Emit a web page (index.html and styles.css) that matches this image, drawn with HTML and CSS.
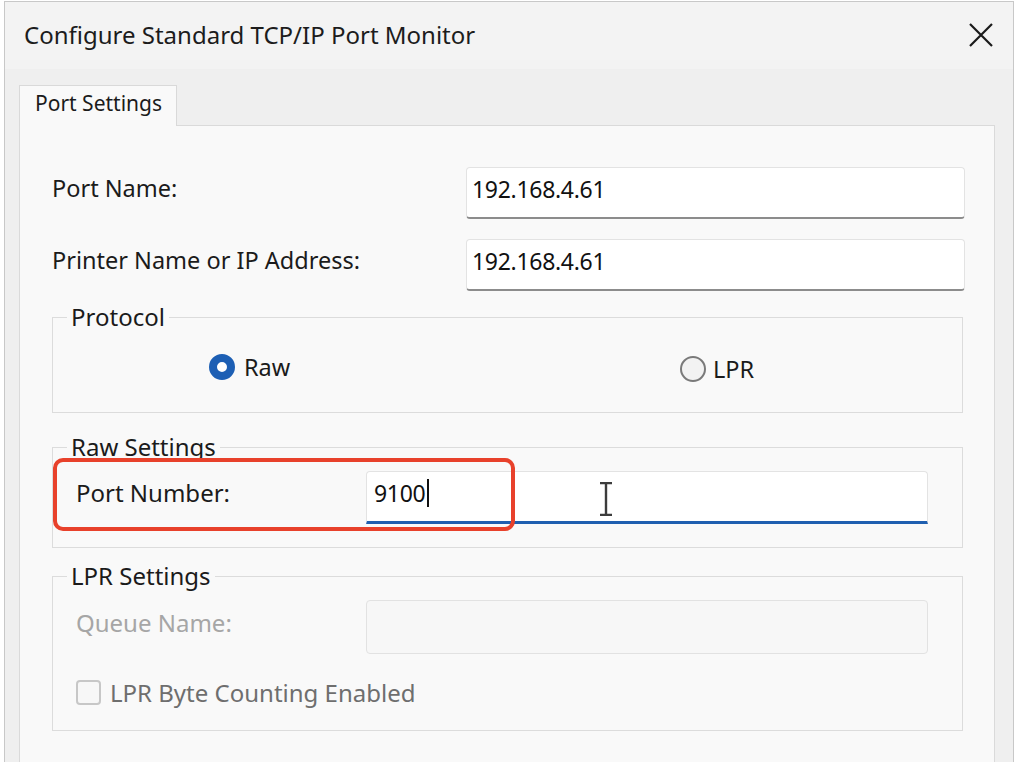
FILE: index.html
```html
<!DOCTYPE html>
<html lang="en">
<head>
    <meta charset="UTF-8">
    <title>Configure Standard TCP/IP Port Monitor</title>
    <link rel="stylesheet" href="styles.css">
</head>
<body>

    <div class="dialog">
        <div class="titlebar">
            <span class="title">Configure Standard TCP/IP Port Monitor</span>
            <svg class="close" width="24" height="24" viewBox="0 0 24 24">
                <path d="M1 1 L23 23 M23 1 L1 23" stroke="#1a1a1a" stroke-width="2.2" fill="none"/>
            </svg>
        </div>

        <div class="body">
            <div class="tabs">
                <div class="tab">Port Settings</div>
            </div>

            <div class="panel">
                <div class="row">
                    <span class="label">Port Name:</span>
                    <div class="field">192.168.4.61</div>
                </div>
                <div class="row second">
                    <span class="label">Printer Name or IP Address:</span>
                    <div class="field">192.168.4.61</div>
                </div>

                <fieldset class="group protocol">
                    <legend>Protocol</legend>
                    <div class="radios">
                        <div class="radio checked"><span class="dot"></span>Raw</div>
                        <div class="radio lpr"><span class="dot"></span>LPR</div>
                    </div>
                </fieldset>

                <fieldset class="group raw">
                    <legend>Raw Settings</legend>
                    <div class="sub-row">
                        <span class="label">Port Number:</span>
                        <div class="field wide focused">9100<span class="caret"></span></div>
                    </div>
                    <div class="highlight"></div>
                    <svg class="ibeam" width="16" height="34" viewBox="0 0 16 34">
                        <path d="M2 1 H14 M8 1 V33 M2 33 H14" stroke="#3c3c3c" stroke-width="2.4" fill="none"/>
                    </svg>
                </fieldset>

                <fieldset class="group lpr-group">
                    <legend>LPR Settings</legend>
                    <div class="sub-row">
                        <span class="label disabled">Queue Name:</span>
                        <div class="field wide off"></div>
                    </div>
                    <div class="check disabled"><span class="box"></span>LPR Byte Counting Enabled</div>
                </fieldset>

                <div class="check snmp"><span class="box"></span>SNMP Status Enabled</div>
            </div>
        </div>
    </div>

</body>
</html>
```

FILE: styles.css
```css
body {
    margin: 0;
    background: #fff;
    font-family: "Noto Sans", sans-serif;
    color: #1b1b1b;
    overflow: hidden;
    height: 762px;
}

.dialog {
    margin: 1px 0 0 4px;
    width: 1008px;
    border: 1px solid #c8c8c8;
    background: #efefef;
}

.titlebar {
    height: 67px;
    background: #f3f3f3;
    display: flex;
    align-items: center;
    justify-content: space-between;
    padding: 0 20px 0 19px;
}

.title {
    font-size: 24px;
    color: #1c1c1c;
    margin-top: -2px;
}

.close {
    display: block;
    margin-top: -2px;
}

.body {
    padding: 16px 18px 0 14px;
}

.tabs {
    display: flex;
}

.tab {
    width: 158px;
    height: 41px;
    box-sizing: border-box;
    border: 1px solid #d9d9d9;
    border-bottom: none;
    background: #f9f9f9;
    font-size: 21px;
    padding: 3px 0 0 15px;
    margin-bottom: -1px;
    position: relative;
    z-index: 1;
}

.panel {
    background: #f9f9f9;
    border: 1px solid #dadada;
    height: 700px;
    padding: 41px 29px 0 32px;
}

.row {
    display: flex;
    align-items: center;
    justify-content: space-between;
}

.row.second {
    margin-top: 20px;
}

.label {
    font-size: 23.5px;
    padding-bottom: 10px;
}

.sub-row .label {
    font-size: 24px;
}

.label.disabled {
    color: #a6a6a6;
}

.field {
    width: 499px;
    height: 52px;
    box-sizing: border-box;
    background: #fff;
    border: 1px solid #e3e3e3;
    border-bottom: 2px solid #8c8c8c;
    border-radius: 4px;
    font-size: 23px;
    letter-spacing: -0.3px;
    padding: 5px 0 0 5px;
    color: #111;
}

.group {
    margin: 14px 2px 0 0;
    border: 1px solid #dcdcdc;
    padding: 12px 34px 23px 23px;
    position: relative;
}

.group legend {
    font-size: 24px;
    line-height: 24px;
    padding: 0 4px;
    margin-left: -9px;
}

.protocol {
    padding-top: 19px;
    padding-bottom: 27px;
}

.radios {
    display: grid;
    grid-template-columns: 471px 1fr;
    padding-left: 133px;
}

.radio {
    display: flex;
    align-items: center;
    font-size: 23.5px;
}

.radio .dot {
    width: 26px;
    height: 26px;
    box-sizing: border-box;
    border-radius: 50%;
    margin-right: 9px;
}

.radio.checked .dot {
    border: 8px solid #1d5fb4;
    background: #fff;
}

.radio.lpr {
    margin-top: 5px;
}

.radio.lpr .dot {
    border: 2px solid #7a7a7a;
    background: #f2f2f2;
    margin-right: 7px;
}

.raw {
    margin-top: 22px;
}

.sub-row {
    display: flex;
    align-items: center;
    justify-content: space-between;
}

.field.wide {
    width: 562px;
}

.field.focused {
    height: 53px;
    border-bottom: 3px solid #1f5fb0;
    border-radius: 4px 4px 0 0;
    display: flex;
    align-items: center;
    padding: 0 0 7px 7px;
}

.caret {
    display: inline-block;
    width: 2px;
    height: 28px;
    background: #111;
    margin-left: 2px;
}

.field.off {
    background: #f7f7f7;
    border: 1px solid #e2e2e2;
    height: 54px;
}

.highlight {
    position: absolute;
    left: 0;
    top: -1px;
    width: 454px;
    height: 65px;
    border: 4px solid #e8412b;
    border-radius: 10px;
}

.ibeam {
    position: absolute;
    left: 545px;
    top: 23px;
}

.lpr-group {
    margin-top: 16px;
    padding-bottom: 21px;
}

.check {
    display: flex;
    align-items: center;
    font-size: 24px;
    margin-top: 22px;
}

.check .box {
    width: 25px;
    height: 25px;
    box-sizing: border-box;
    border: 2px solid #c7c7c7;
    border-radius: 4px;
    background: #f7f7f7;
    margin-right: 9px;
}

.check.disabled {
    color: #6e6e6e;
}

.snmp {
    margin: 28px 0 0 24px;
}

.snmp .box {
    border-color: #7a7a7a;
}
```
